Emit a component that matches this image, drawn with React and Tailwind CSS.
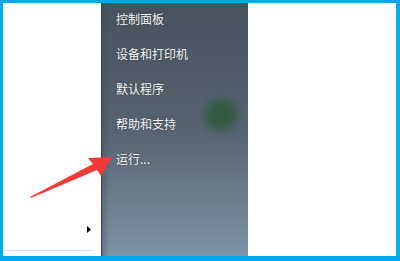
import React from "react";

const items = ["控制面板", "设备和打印机", "默认程序", "帮助和支持", "运行..."];

export default function App() {
  return (
    <div className="relative flex h-[261px] w-[400px] bg-[#03a9ee] pb-[5px] pl-[3px] pr-[4px] pt-[3px]">
      {/* left list column */}
      <div className="relative flex w-[98px] flex-col justify-end bg-white">
        <div className="flex justify-end pb-[17px] pr-[10px]">
          <svg width="4" height="7" viewBox="0 0 4 7">
            <polygon points="0,0 4,3.5 0,7" fill="#000" />
          </svg>
        </div>
        <div className="mb-[5px] h-px w-[91px] bg-[#cfe3f5]" />
      </div>
      <div className="w-px bg-[#3b4047]" />
      {/* start menu right pane */}
      <div className="relative w-[146px] overflow-hidden bg-gradient-to-b from-[#47525d] via-[#566470] to-[#7e93a6]">
        <div className="absolute left-0 top-0 h-full w-[8px] bg-gradient-to-r from-[#3f4a55]/40 to-transparent" />
        <div className="absolute left-[103px] top-[96px] h-[32px] w-[32px] rounded-full bg-[#30593f] opacity-90 blur-[4px]" />
        <ul
          className="relative -mt-[2px] flex flex-col pl-[14px] text-[12px] leading-[35px] text-[#f4f5f6]"
          style={{ fontFamily: '"Microsoft YaHei", "Noto Sans CJK SC", sans-serif', textShadow: "0 0 2px rgba(0,0,0,0.35)" }}
        >
          {items.map((t) => (
            <li key={t}>{t}</li>
          ))}
        </ul>
      </div>
      <div className="flex-1 bg-white" />
      {/* annotation arrow */}
      <svg className="absolute left-0 top-0" width="400" height="261" viewBox="0 0 400 261">
        <polygon
          points="30,197 93,164 88,158 112,157 101,176 97,170 31,198"
          fill="#f23a37"
        />
      </svg>
    </div>
  );
}
